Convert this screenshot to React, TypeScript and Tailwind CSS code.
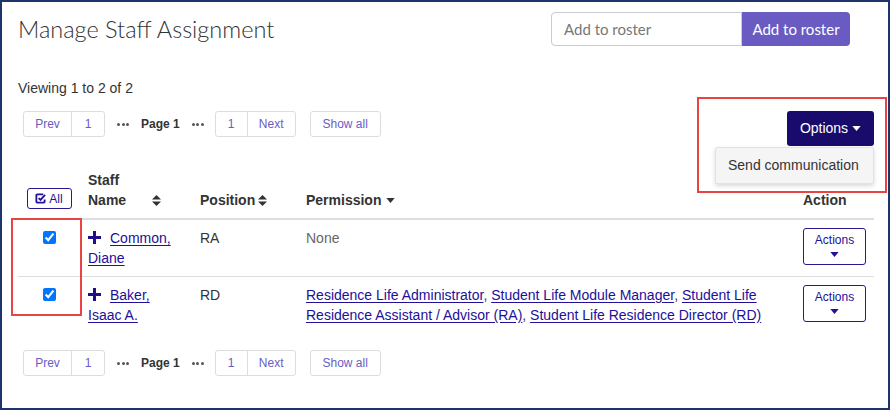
import React from "react";

const linkCls = "text-[#22109a] underline underline-offset-2";

function Caret({ className }: { className?: string }) {
  return (
    <svg viewBox="0 0 10 6" className={className} fill="currentColor">
      <path d="M0 0h10L5 6z" />
    </svg>
  );
}

function SortIcon() {
  return (
    <svg viewBox="0 0 10 12" className="h-[11px] w-[9px]" fill="currentColor">
      <path d="M5 0l5 5H0z" />
      <path d="M0 7h10l-5 5z" />
    </svg>
  );
}

function Plus() {
  return (
    <svg viewBox="0 0 13 13" className="inline-block h-[13px] w-[13px] align-[-1px]" fill="#1f0d8c">
      <rect x="5" y="0" width="3" height="13" />
      <rect x="0" y="5" width="13" height="3" />
    </svg>
  );
}

function Dots() {
  return (
    <span className="flex items-center gap-[1.5px] text-[#555]">
      <span className="h-[3px] w-[3px] rounded-full bg-current" />
      <span className="h-[3px] w-[3px] rounded-full bg-current" />
      <span className="h-[3px] w-[3px] rounded-full bg-current" />
    </span>
  );
}

function Pager() {
  const box = "flex h-[26px] items-center justify-center border border-[#ddd] text-[12px] text-[#6a5cc4]";
  return (
    <div className="ml-[5px] flex items-center">
      <div className="flex">
        <span className={`${box} w-[49px] rounded-l-[3px]`}>Prev</span>
        <span className={`${box} -ml-px w-[34px] rounded-r-[3px]`}>1</span>
      </div>
      <div className="ml-[12px]"><Dots /></div>
      <span className="ml-[12px] text-[12px] font-bold text-[#333]">Page 1</span>
      <div className="ml-[12px]"><Dots /></div>
      <div className="ml-[11px] flex">
        <span className={`${box} w-[33px] rounded-l-[3px]`}>1</span>
        <span className={`${box} -ml-px w-[49px] rounded-r-[3px]`}>Next</span>
      </div>
      <span className={`${box} ml-[14px] w-[71px] rounded-[3px]`}>Show all</span>
    </div>
  );
}

function ActionsButton() {
  return (
    <div className="flex h-[37px] w-[63px] flex-col items-center rounded-[3px] border border-[#2a1890] pt-[3px] text-[12px] leading-[16px] text-[#22109a]">
      <span>Actions</span>
      <Caret className="mt-[4px] h-[5px] w-[9px]" />
    </div>
  );
}

type Row = {
  first: string;
  last: string;
  position: string;
  permissions: string[];
};

const rows: Row[] = [
  { last: "Common,", first: "Diane", position: "RA", permissions: [] },
  {
    last: "Baker,",
    first: "Isaac A.",
    position: "RD",
    permissions: [
      "Residence Life Administrator",
      "Student Life Module Manager",
      "Student Life Residence Assistant / Advisor (RA)",
      "Student Life Residence Director (RD)",
    ],
  },
];

export default function App() {
  return (
    <div className="relative h-[410px] w-[890px] overflow-hidden border-2 border-[#1f3569] bg-white pl-[16px] pr-[14px] font-['Liberation_Sans',Arial,sans-serif] text-[14px] text-[#333]">
      {/* header */}
      <div className="flex items-start justify-between pt-[10px] pr-[24px]">
        <h1 className="h-[34px] font-['Lato',sans-serif] text-[23.5px] font-light leading-[34px] text-[#333]">
          Manage Staff Assignment
        </h1>
        <div className="flex font-['Lato',sans-serif]">
          <div className="flex h-[34px] w-[191px] items-center rounded-l-[4px] border border-[#ccc] px-[12px] text-[15px] text-[#777]">
            Add to roster
          </div>
          <button className="h-[34px] w-[108px] rounded-r-[4px] bg-[#6a5bc3] text-[15px] text-white">
            Add to roster
          </button>
        </div>
      </div>

      <p className="mt-[32px] leading-[20px]">Viewing 1 to 2 of 2</p>

      <div className="mt-[13px] flex items-start justify-between">
        <Pager />
        <div className="relative">
          <button className="flex h-[35px] w-[87px] items-center justify-center gap-[4px] rounded-[3px] bg-[#190b6b] text-white">
            Options <Caret className="h-[5px] w-[9px]" />
          </button>
          <div className="absolute right-0 top-[36px] w-[159px] rounded-[2px] border border-[#e2e2e2] bg-[#f5f5f5] py-[7px] pl-[12px] shadow-[0_2px_4px_rgba(0,0,0,0.15)]">
            Send communication
          </div>
        </div>
      </div>

      {/* table */}
      <div className="mt-[24px] w-[856px]">
        <div className="flex items-end border-b-2 border-[#ddd] pb-[8px] font-bold leading-[20px]">
          <div className="flex w-[62px] justify-center pb-[1px]">
            <span className="flex h-[21px] w-[45px] items-center justify-center gap-[3px] rounded-[3px] border border-[#2a1890] text-[12px] font-normal text-[#22109a]">
              <svg viewBox="0 0 12 12" className="h-[11px] w-[11px]" fill="none" stroke="currentColor" strokeWidth="2">
                <path d="M9 1.5H2.5a1 1 0 0 0-1 1v7a1 1 0 0 0 1 1h7a1 1 0 0 0 1-1V7" />
                <path d="M4 5.5l2 2 5-5.5" />
              </svg>
              All
            </span>
          </div>
          <div className="flex w-[112px] items-end justify-between px-[8px]">
            <span>Staff<br />Name</span>
            <span className="mb-[4px] mr-[23px]"><SortIcon /></span>
          </div>
          <div className="flex w-[106px] items-center gap-[3px] px-[8px]">
            Position <SortIcon />
          </div>
          <div className="flex w-[497px] items-center gap-[5px] px-[8px]">
            Permission <Caret className="h-[5px] w-[9px]" />
          </div>
          <div className="w-[79px] px-[8px]">Action</div>
        </div>

        {rows.map((r, i) => (
          <div key={r.last} className={`flex items-start pt-[8px] pb-[8px] leading-[20px] ${i === 0 ? "border-b border-[#ddd]" : ""}`}>
            <div className="flex w-[62px] justify-center pt-[3px]">
              <input type="checkbox" checked readOnly className="h-[13px] w-[13px]" />
            </div>
            <div className="w-[112px] px-[8px]">
              <Plus />
              <a className={`${linkCls} ml-[9px]`}>{r.last}</a>{" "}
              <a className={linkCls}>{r.first}</a>
            </div>
            <div className="w-[106px] px-[8px]">{r.position}</div>
            <div className="w-[497px] px-[8px]">
              {r.permissions.length === 0 ? (
                <span className="text-[#666]">None</span>
              ) : (
                r.permissions.map((p, j) => (
                  <React.Fragment key={p}>
                    <a className={linkCls}>{p}</a>
                    {j < r.permissions.length - 1 ? ", " : ""}
                  </React.Fragment>
                ))
              )}
            </div>
            <div className="w-[79px] px-[8px]">
              <ActionsButton />
            </div>
          </div>
        ))}
      </div>

      <div className="mt-[17px]">
        <Pager />
      </div>

      {/* highlight boxes */}
      <div className="absolute left-[695px] top-[95px] h-[96px] w-[190px] border-2 border-[#ea4343]" />
      <div className="absolute left-[9px] top-[216px] h-[98px] w-[71px] border-2 border-[#ea4343]" />
    </div>
  );
}
